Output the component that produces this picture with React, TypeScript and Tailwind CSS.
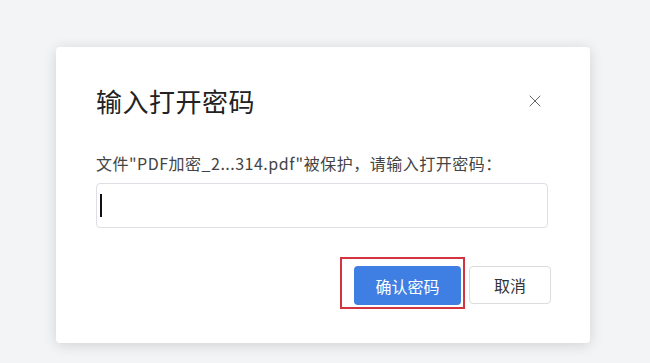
import { X } from 'lucide-react'

export default function App() {
  return (
    <div className="w-[650px] h-[363px] overflow-hidden bg-[#f3f4f6] pt-[47px] pl-[56px] font-['Microsoft_YaHei','Noto_Sans_CJK_SC',sans-serif]">
      <div className="w-[534px] h-[296px] rounded-[4px] bg-white shadow-[0_2px_14px_rgba(0,0,0,0.14)] pl-[40px] pr-[42px] pt-[38px]">
        {/* title */}
        <div className="flex items-center justify-between">
          <h2 className="text-[26px] leading-[32px] tracking-[0.5px] text-[#222]">输入打开密码</h2>
          <X size={20} strokeWidth={1.2} className="text-[#666] mr-[3px]" />
        </div>

        <p className="mt-[36px] text-[16px] leading-[20px] tracking-[0.5px] text-[#444]">
          文件"PDF加密_2...314.pdf"被保护，请输入打开密码：
        </p>

        <div className="mt-[10px] h-[45px] rounded-[4px] border border-[#dcdfe3] flex items-center pl-[3px]">
          <div className="w-[2px] h-[23px] bg-[#111]" />
        </div>

        {/* actions */}
        <div className="mt-[38px] -mr-[3px] flex justify-end gap-[8px]">
          <div className="relative">
            <button className="w-[107px] h-[39px] rounded-[4px] bg-[#3f7fe3] text-white text-[16px]">确认密码</button>
            <div className="absolute -left-[14px] -top-[9px] -right-[4px] -bottom-[4px] border-2 border-[#d2353f]" />
          </div>
          <button className="w-[82px] h-[38px] rounded-[4px] border border-[#dcdcdc] bg-white text-[#333] text-[16px]">取消</button>
        </div>
      </div>
    </div>
  )
}
